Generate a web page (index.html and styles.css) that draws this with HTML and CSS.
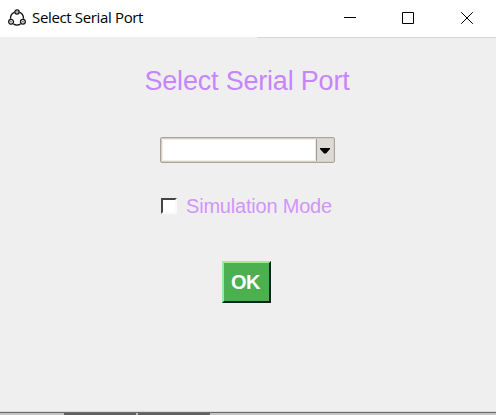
FILE: index.html
```html
<!DOCTYPE html>
<html lang="en">
<head>
<meta charset="utf-8">
<title>Select Serial Port</title>
<link rel="stylesheet" href="styles.css">
</head>
<body>
<div class="window">
  <header class="titlebar">
    <svg class="app-icon" viewBox="0 0 18 18" width="18" height="18" fill="none" stroke="#111" stroke-width="1.3">
      <path d="M6.6 3.2A7 7 0 0 0 2.5 9.8M11.4 3.2A7 7 0 0 1 15.5 9.8M5.5 15.2Q9 17 12.5 15.2"/>
      <circle cx="9" cy="3" r="2.1"/><circle cx="3.1" cy="12.8" r="2.4"/><circle cx="14.9" cy="12.8" r="2.4"/>
      <path d="M8 3h2M2 12.8h2M14 12.8h2" stroke-width=".7"/>
    </svg>
    <span class="title">Select Serial Port</span>
    <div class="controls">
      <svg viewBox="0 0 12 12" width="12" height="12"><path d="M0 5.5h12"/></svg>
      <svg viewBox="0 0 12 12" width="12" height="12"><path d="M.5 .5h11v11h-11z"/></svg>
      <svg viewBox="0 0 12 12" width="12" height="12"><path d="M.2 .2l11.6 11.6M11.8 .2L.2 11.8"/></svg>
    </div>
  </header>
  <main class="content">
    <h1 class="heading">Select Serial Port</h1>
    <div class="combo">
      <div class="field"></div>
      <div class="arrow"><svg viewBox="0 0 10 6" width="10" height="6"><path d="M0 0h10v1L6 5.5H4L0 1z"/></svg></div>
    </div>
    <div class="option">
      <span class="checkbox"></span>
      <span class="label">Simulation Mode</span>
    </div>
    <button class="ok">OK</button>
  </main>
</div>
<footer class="taskbar"><i></i><i></i></footer>
</body>
</html>
```

FILE: styles.css
```css
* { box-sizing: border-box; }
body {
  margin: 0;
  width: 496px;
  height: 415px;
  overflow: hidden;
  background: #efefef;
  font-family: "Liberation Sans", Arial, sans-serif;
}
.window {
  height: 413px;
  border-bottom: 1px solid #6b6b6b;
  box-shadow: inset 0 -1px #dadada;
}
.titlebar {
  display: flex;
  align-items: center;
  height: 38px;
  padding: 0 23px 3px 8px;
  background:
    linear-gradient(90deg, #efefef 257px, #d6d6d6 257px) 0 37px / 100% 1px no-repeat,
    #fff;
}
.app-icon { display: block; }
.title {
  margin-left: 6px;
  padding-bottom: 1px;
  font: 15px/20px "Open Sans", sans-serif;
  letter-spacing: -0.35px;
  color: #000;
  white-space: nowrap;
}
.controls {
  display: grid;
  grid-template-columns: 58px 59px 12px;
  margin-left: auto;
}
.controls svg {
  display: block;
  fill: none;
  stroke: #000;
  stroke-width: 1;
}
.content {
  display: flex;
  flex-direction: column;
  align-items: center;
}
.heading {
  margin: 27px 2px 0 0;
  font-size: 27px;
  line-height: 32px;
  font-weight: 400;
  letter-spacing: -0.2px;
  color: #c785fc;
  white-space: nowrap;
}
.combo {
  display: flex;
  width: 175px;
  height: 26px;
  margin-top: 40px;
  margin-right: 2px;
  border: 1px solid #aaa399;
  border-radius: 2px;
  box-shadow: inset 0 0 0 1px #d5d1ca;
  padding: 1px;
}
.field {
  flex: 1;
  background: #fff;
  border: 1px solid #efede8;
}
.arrow {
  display: flex;
  align-items: center;
  justify-content: center;
  width: 17px;
  padding-top: 2px;
  background: #dcdad5;
  border-left: 1px solid #9e9a91;
}
.option {
  display: flex;
  align-items: center;
  width: 174px;
  height: 26px;
  margin-top: 30px;
}
.checkbox {
  width: 16px;
  height: 16px;
  background: #fff;
  border: 2px solid;
  border-color: #444 #fafafa #fafafa #444;
}
.label {
  margin-left: 9px;
  font-size: 20px;
  line-height: 26px;
  letter-spacing: -0.2px;
  color: #d095fc;
  white-space: nowrap;
}
.ok {
  width: 49px;
  height: 42px;
  margin: 42px 3px 0 0;
  padding: 0 2px 0 0;
  border: 2px solid;
  border-color: #92f09a #142417 #142417 #92f09a;
  background: #4caf50;
  color: #fff;
  font: bold 20px/36px "Liberation Sans", Arial, sans-serif;
  letter-spacing: -0.4px;
}
.taskbar {
  display: flex;
  gap: 2px;
  height: 2px;
  padding-left: 64px;
  background: #c3c3c3;
}
.taskbar i { width: 72px; background: #606060; }
```
